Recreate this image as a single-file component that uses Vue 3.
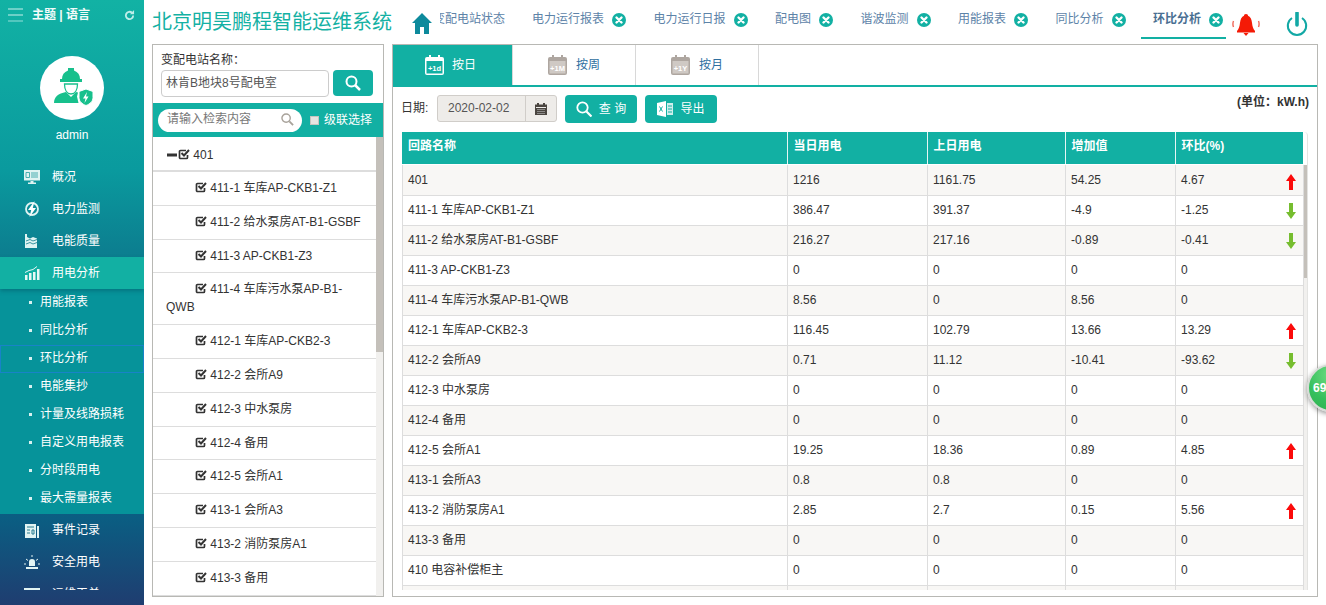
<script setup>
const menuTop = [
  { name: '概况', icon: 'monitor' },
  { name: '电力监测', icon: 'bolt' },
  { name: '电能质量', icon: 'quality' },
]
const subMenu = ['用能报表', '同比分析', '环比分析', '电能集抄', '计量及线路损耗', '自定义用电报表', '分时段用电', '最大需量报表']
const tabs = ['电力运行报表', '电力运行日报', '配电图', '谐波监测', '用能报表', '同比分析', '环比分析']
const tree = [
  { name: '401', root: true },
  { name: '411-1 车库AP-CKB1-Z1' },
  { name: '411-2 给水泵房AT-B1-GSBF' },
  { name: '411-3 AP-CKB1-Z3' },
  { name: '411-4 车库污水泵AP-B1-QWB' },
  { name: '412-1 车库AP-CKB2-3' },
  { name: '412-2 会所A9' },
  { name: '412-3 中水泵房' },
  { name: '412-4 备用' },
  { name: '412-5 会所A1' },
  { name: '413-1 会所A3' },
  { name: '413-2 消防泵房A1' },
  { name: '413-3 备用' },
]
const modes = [
  { name: '按日', tag: '+1d', active: true },
  { name: '按周', tag: '+1M' },
  { name: '按月', tag: '+1Y' },
]
const rows = [
  ['401', '1216', '1161.75', '54.25', '4.67', 'up'],
  ['411-1 车库AP-CKB1-Z1', '386.47', '391.37', '-4.9', '-1.25', 'down'],
  ['411-2 给水泵房AT-B1-GSBF', '216.27', '217.16', '-0.89', '-0.41', 'down'],
  ['411-3 AP-CKB1-Z3', '0', '0', '0', '0', ''],
  ['411-4 车库污水泵AP-B1-QWB', '8.56', '0', '8.56', '0', ''],
  ['412-1 车库AP-CKB2-3', '116.45', '102.79', '13.66', '13.29', 'up'],
  ['412-2 会所A9', '0.71', '11.12', '-10.41', '-93.62', 'down'],
  ['412-3 中水泵房', '0', '0', '0', '0', ''],
  ['412-4 备用', '0', '0', '0', '0', ''],
  ['412-5 会所A1', '19.25', '18.36', '0.89', '4.85', 'up'],
  ['413-1 会所A3', '0.8', '0.8', '0', '0', ''],
  ['413-2 消防泵房A1', '2.85', '2.7', '0.15', '5.56', 'up'],
  ['413-3 备用', '0', '0', '0', '0', ''],
  ['410 电容补偿柜主', '0', '0', '0', '0', ''],
  ['', '', '', '', '', ''],
]
</script>

<template>
  <div class="app">
    <aside class="side">
      <div class="side-top">
        <svg class="burger" viewBox="0 0 15 14" width="15" height="14"><path d="M0 1h15M0 7h15" stroke="#c8f0ec" stroke-width="1.200" fill="none"/><path d="M0 13h15" stroke="#7fd8d0" stroke-width="1.200" fill="none"/></svg>
        <span class="theme">主题 | 语言</span>
        <svg class="refresh" viewBox="0 0 12 12" width="11" height="11"><path d="M10 6a4 4 0 1 1-1.300-3" stroke="#bfeee9" stroke-width="2" fill="none"/><path d="M11 0v4.500H6.500z" fill="#bfeee9"/></svg>
      </div>
      <div class="avatar">
        <svg viewBox="0 0 64 64" width="64" height="64">
          <path d="M22 23c0-4 2-7 6-8.500V12h6v2.500c4 1.500 6 4.500 6 8.500h2v3H20v-3z" fill="#17c08c"/>
          <path d="M24.500 28h13c0 6-2.500 10-6.500 10s-6.500-4-6.500-10z" fill="none" stroke="#17c08c" stroke-width="1.300"/>
          <path d="M14 47c0-6 4-9.500 12-11l5 5 5-5 2 .5-1 4 1.500 6.500z" fill="#17c08c"/>
          <path d="M46 33l7 2.500v6c0 4-3 6.500-7 8-4-1.500-7-4-7-8v-6z" fill="#17c08c" stroke="#fff" stroke-width="1"/>
          <path d="M47 36l-4 6.500h2.500L44.500 47l4-6.500H46z" fill="#fff"/>
        </svg>
      </div>
      <div class="user">admin</div>
      <nav class="menu">
        <a v-for="m in menuTop" :key="m.name" class="item">
          <svg class="mi" viewBox="0 0 16 16" width="16" height="16">
            <template v-if="m.icon === 'monitor'"><path d="M0 1h16v10.500H0zM6.500 12h3v1.500H12v1.500H4v-1.500h2.500z" fill="#dff3f2"/><path d="M2 3.500h3.500v5H2zM7 4h7M7 6h7M7 8h7" stroke="#3aa6a8" fill="none" stroke-width=".9"/></template>
            <template v-else-if="m.icon === 'bolt'"><circle cx="8" cy="8" r="6" fill="none" stroke="#dff3f2" stroke-width="1.800"/><path d="M10.500 0L4 9h3.200L5.500 16l6.500-9H8.800z" fill="#fff"/></template>
            <template v-else><path d="M1 1h2v3l3 1.500L9 4l4 1.500V15H1z" fill="#dff3f2"/><path d="M2 8l4-1.500 3 1.500 4-1.500M2 11l4-1.500 3 1.500 4-1.500" stroke="#3a93a0" fill="none"/></template>
          </svg>
          <span>{{ m.name }}</span>
        </a>
        <a class="item active">
          <svg class="mi" viewBox="0 0 16 16" width="16" height="16"><path d="M1 10h2.500v5H1zM5 8h2.500v7H5zM9 7h2.500v8H9zM13 4h2.500v11H13z" fill="#e8f8f6"/><path d="M1 7.500l4-2 4-1 4-3" stroke="#e8f8f6" fill="none"/></svg>
          <span>用电分析</span>
        </a>
        <div class="sub">
          <a v-for="s in subMenu" :key="s" class="sub-item" :class="{ cur: s === '环比分析' }"><i></i>{{ s }}</a>
        </div>
        <a class="item">
          <svg class="mi" viewBox="0 0 16 16" width="16" height="16"><path d="M1 2h11v14H1z" fill="#e2f4f3"/><path d="M13 4h2v12h-2z" fill="#e2f4f3"/><path d="M3 5h7M3 8h3M3 11h3M8 8h2v4H8z" stroke="#2a7d90" fill="none"/></svg>
          <span>事件记录</span>
        </a>
        <a class="item">
          <svg class="mi" viewBox="0 0 16 16" width="16" height="16"><path d="M5 12V8a3 3 0 0 1 6 0v4zM2 13h12v2H2z" fill="#e2f4f3"/><path d="M8 1v2M2 5l2 1.500M14 5l-2 1.500M0 10h2M14 10h2" stroke="#e2f4f3"/></svg>
          <span>安全用电</span>
        </a>
        <a class="item">
          <svg class="mi" viewBox="0 0 16 16" width="16" height="16"><path d="M0 2h16v12H0z" fill="#e2f4f3"/></svg>
          <span>运维工单</span>
        </a>
      </nav>
    </aside>

    <main class="main">
      <header class="head">
        <h1 class="title">北京明昊鹏程智能运维系统</h1>
        <svg class="home" viewBox="0 0 20 21" width="20" height="21"><path d="M10 0L0 10h3v11h5v-7h4v7h5V10h3z" fill="#0d8a9c"/></svg>
        <div class="tabs">
          <div class="tabs-inner">
            <a class="tab first"><span>变配电站状态</span></a>
            <a v-for="t in tabs" :key="t" class="tab" :class="{ on: t === '环比分析' }">
              <span>{{ t }}</span>
              <svg class="x" viewBox="0 0 14 14" width="14" height="14"><circle cx="7" cy="7" r="7" fill="#12b0a3"/><path d="M4.500 4.500l5 5M9.500 4.500l-5 5" stroke="#fff" stroke-width="2.400" stroke-linecap="round"/></svg>
            </a>
          </div>
        </div>
        <svg class="bell" viewBox="0 0 28 22" width="28" height="22">
          <path d="M14 0c1.400 0 2 .8 2 1.800 2.500 1 3.500 3.500 4 7 .4 3.500 1 6 3 8.200v1.500H5V17c2-2.200 2.600-4.700 3-8.200.5-3.500 1.500-6 4-7C12 .8 12.600 0 14 0z" fill="#f41a06"/>
          <path d="M11.500 19h5l-2.500 3z" fill="#f41a06"/>
          <path d="M1.500 7c-.8 2-.8 4 0 6M26.500 7c.8 2 .8 4 0 6" stroke="#f0685a" stroke-width="1.400" fill="none"/>
        </svg>
        <svg class="power" viewBox="0 0 22 24" width="22" height="24">
          <path d="M6 6a9.200 9.200 0 1 0 10 0" fill="none" stroke="#12a8a5" stroke-width="2"/>
          <path d="M11 1v12" stroke="#12a8a5" stroke-width="3.600" stroke-linecap="round"/>
        </svg>
      </header>

      <div class="body">
        <section class="left">
          <div class="station">
            <label>变配电站名称：</label>
            <div class="station-row">
              <div class="station-input">林肯B地块8号配电室</div>
              <button class="station-btn">
                <svg viewBox="0 0 16 16" width="16" height="16"><circle cx="6.500" cy="6.500" r="5" fill="none" stroke="#fff" stroke-width="2"/><path d="M10 10l5 5" stroke="#fff" stroke-width="2.500"/></svg>
              </button>
            </div>
          </div>
          <div class="filter">
            <div class="pill">
              <span>请输入检索内容</span>
              <svg viewBox="0 0 14 14" width="13" height="13"><circle cx="5.500" cy="5.500" r="4.500" fill="none" stroke="#a8a29a" stroke-width="1.500"/><path d="M9 9l4 4" stroke="#a8a29a" stroke-width="2"/></svg>
            </div>
            <i class="cb"></i>
            <span class="cascade">级联选择</span>
          </div>
          <div class="tree-wrap">
            <ul class="tree">
              <li v-for="n in tree" :key="n.name" :class="{ root: n.root }">
                <svg v-if="n.root" class="minus" viewBox="0 0 10 4" width="10" height="4"><rect width="10" height="3" y="0.500" fill="#333"/></svg>
                <svg class="chk" viewBox="0 0 12 12" width="12" height="12"><path d="M9.500 7v2.500a1 1 0 0 1-1 1h-6a1 1 0 0 1-1-1v-6a1 1 0 0 1 1-1H8" fill="none" stroke="#333" stroke-width="1.700"/><path d="M3.500 5L6 7.500 11 2" fill="none" stroke="#333" stroke-width="2"/></svg>
                {{ n.name }}
              </li>
            </ul>
            <div class="track tree-track"><div class="thumb"></div></div>
          </div>
        </section>

        <section class="right">
          <div class="modes">
            <a v-for="m in modes" :key="m.name" class="mode" :class="{ on: m.active }">
              <svg viewBox="0 0 19 20" width="19" height="20">
                <path d="M2 2h2V0h2v2h7V0h2v2h2a2 2 0 0 1 2 2v14a2 2 0 0 1-2 2H2a2 2 0 0 1-2-2V4a2 2 0 0 1 2-2z" :fill="m.active ? '#fff' : '#aea6a0'"/>
                <rect x="1.500" y="6" width="16" height="12.500" :fill="m.active ? '#12b0a3' : '#cfc9c4'"/>
                <text x="9.500" y="15.500" text-anchor="middle" font-size="7.500" font-weight="700" fill="#fff" font-family="Liberation Sans">{{ m.tag }}</text>
              </svg>
              <span>{{ m.name }}</span>
            </a>
          </div>
          <div class="tools">
            <span class="date-label">日期:</span>
            <div class="date">
              <span class="date-val">2020-02-02</span>
              <span class="date-add">
                <svg viewBox="0 0 12 12" width="12" height="12"><path d="M0 1.500h2V0h2v1.500h4V0h2v1.500h2V12H0z" fill="#4a4540"/><path d="M1 4.500h10" stroke="#eeece9"/><path d="M2 6.500h8M2 8.500h8M2 10.500h8" stroke="#aaa" stroke-width=".7"/></svg>
              </span>
            </div>
            <button class="btn">
              <svg viewBox="0 0 16 16" width="16" height="16"><circle cx="6.500" cy="6.500" r="5.200" fill="none" stroke="#fff" stroke-width="1.800"/><path d="M10.500 10.500l5 5" stroke="#fff" stroke-width="2.200"/></svg>
              <span class="spaced">查 询</span>
            </button>
            <button class="btn">
              <svg viewBox="0 0 16 16" width="16" height="16"><path d="M0 2l9-2v16l-9-2z" fill="#fff"/><path d="M10 2h6v12h-6z" fill="#cfefec"/><path d="M2.500 5.500l3 5M5.500 5.500l-3 5" stroke="#12b0a3"/><path d="M11 5h4M11 8h4M11 11h4" stroke="#12b0a3"/></svg>
              <span>导出</span>
            </button>
            <span class="unit">(单位：kW.h)</span>
          </div>
          <div class="tbl">
            <div class="tbl-inner">
              <table class="t-head">
                <colgroup><col class="c1"><col class="c2"><col class="c3"><col class="c4"><col class="c5"></colgroup>
                <thead><tr><th>回路名称</th><th>当日用电</th><th>上日用电</th><th>增加值</th><th>环比(%)</th></tr></thead>
              </table>
              <div class="t-body">
                <table class="t-rows">
                  <colgroup><col class="c1"><col class="c2"><col class="c3"><col class="c4"><col class="c5"></colgroup>
                  <tbody>
                    <tr v-for="(r, i) in rows" :key="i">
                      <td>{{ r[0] }}</td><td>{{ r[1] }}</td><td>{{ r[2] }}</td><td>{{ r[3] }}</td>
                      <td>
                        <div class="rate">
                          <span>{{ r[4] }}</span>
                          <svg v-if="r[5] === 'up'" viewBox="0 0 10 16" width="10" height="16"><path d="M5 0l5 7H7v9H3V7H0z" fill="#fb0a0a"/></svg>
                          <svg v-else-if="r[5] === 'down'" viewBox="0 0 10 16" width="10" height="16"><path d="M3 0h4v9h3l-5 7-5-7h3z" fill="#76bd2f"/></svg>
                        </div>
                      </td>
                    </tr>
                  </tbody>
                </table>
                <div class="track body-track"><div class="thumb"></div></div>
              </div>
            </div>
          </div>
        </section>
      </div>
    </main>
    <div class="ball">69</div>
  </div>
</template>

<style scoped>
* { box-sizing: border-box; }
.app {
  position: relative; display: flex; width: 1326px; height: 605px; overflow: hidden; background: #fff;
  font: 12px/1.4 "Liberation Sans", "Noto Sans CJK SC", sans-serif; color: #333;
}
.side {
  width: 144px; flex: none; color: #fff; display: flex; flex-direction: column;
  background: linear-gradient(180deg, #12b2a4 0, #0a9a9e 170px, #0c7f90 250px, #0b5d82 520px, #1f3d70 605px);
}
.side-top { display: flex; align-items: center; height: 32px; padding: 0 9px 2px 8px; }
.burger { flex: none; }
.theme { margin-left: 9px; flex: 1; font-weight: 700; color: #f2fbfa; }
.avatar { width: 64px; height: 64px; margin: 24px auto 0; border-radius: 50%; background: #fff; }
.avatar svg { display: block; }
.user { text-align: center; margin-top: 7px; line-height: 17px; }
.menu { margin-top: 17px; height: 429px; overflow: hidden; display: flex; flex-direction: column; flex: none; }
.item { flex: none; height: 32px; display: flex; align-items: center; padding-left: 24px; gap: 12px; color: #fff; }
.item.active { background: #12b0a3; box-shadow: 0 2px 4px rgba(0,60,80,.35); position: relative; }
.sub { background: #06939a; flex: none; height: 225px; }
.sub-item { display: flex; align-items: center; height: 28px; padding: 0 0 2px 28px; color: #fff; border: 1px solid transparent; }
.sub-item i { width: 3px; height: 3px; background: #d8f1f0; margin-right: 8px; }
.sub-item.cur { border-color: #1883c8; }

.main { flex: 1; display: flex; flex-direction: column; min-width: 0; }
.head { height: 44px; flex: none; display: flex; align-items: flex-start; padding-left: 8px; }
.title { margin: 9px 0 0; font-size: 20px; line-height: 26px; font-weight: 400; color: #14b1a4; white-space: nowrap; width: 240px; flex: none; }
.home { margin: 13px 0 0 20px; flex: none; }
.tabs { width: 790px; margin-left: 8px; overflow: hidden; height: 40px; flex: none; }
.tabs-inner { display: flex; gap: 12.500px; margin-left: -7px; width: max-content; }
.tab { display: flex; align-items: center; height: 39px; padding: 2px 3px 0 12px; gap: 8px; color: #5d83a8; white-space: nowrap; border-bottom: 2px solid transparent; }
.tab.first { padding: 2px 2.500px 0 0; }
.tab.on { border-bottom-color: #12b0a3; color: #4a6f92; font-weight: 700; }
.x { flex: none; }
.bell { margin: 14px 0 0 2px; flex: none; }
.power { margin: 12px 0 0 26px; flex: none; }

.body { flex: 1; display: flex; gap: 8px; padding: 0 8px 8px 8px; min-height: 0; }
.left { width: 232px; flex: none; border: 1px solid #b8b8b4; display: flex; flex-direction: column; min-height: 0; }
.station { padding: 7px 10px 0 8px; height: 58px; flex: none; }
.station label { display: block; line-height: 17px; }
.station-row { display: flex; gap: 4px; margin-top: 1px; }
.station-input { width: 168px; height: 27px; border: 1px solid #ccc; border-radius: 4px; padding-left: 4px; line-height: 25px; color: #555; }
.station-btn { width: 40px; height: 26px; border: 0; border-radius: 4px; background: #12b0a3; display: flex; align-items: center; justify-content: center; padding: 0; }
.filter { height: 34px; background: #12b0a3; display: flex; align-items: center; padding-left: 5px; flex: none; }
.pill { width: 144px; height: 23px; background: #fff; border-radius: 12px; display: flex; align-items: center; justify-content: space-between; padding: 0 8px 1px 9px; color: #777; }
.cb { width: 9px; height: 9px; margin: 1px 5px 0 8px; background: #e6e4e1; border: 1px solid #c8c4bf; }
.cascade { color: #fff; }
.tree-wrap { flex: 1; display: flex; min-height: 0; overflow: hidden; }
.tree { flex: 1; margin: 0; padding: 0; list-style: none; }
.tree li { padding: 8px 10px 7px 13px; line-height: 17.850px; border-bottom: 1px solid #ddd; text-indent: 29px; }
.tree li.root { text-indent: 1px; border-bottom-width: 2px; padding-top: 10px; padding-bottom: 5px; }
.minus { margin-right: 1px; vertical-align: 2px; }
.chk { vertical-align: -1px; }
.track { width: 7px; flex: none; background: #f1f0ee; }
.thumb { background: #c4c0ba; width: 100%; }
.tree-track .thumb { height: 215px; }

.right { flex: 1; border: 1px solid #b8b8b4; min-width: 0; display: flex; flex-direction: column; }
.modes { height: 42px; flex: none; display: flex; border-bottom: 2px solid #12b0a3; }
.mode { display: flex; align-items: center; gap: 9px; width: 123px; padding-left: 35px; color: #2f6f9f; border-right: 1px solid #d8d8d8; }
.mode.on { background: #12b0a3; color: #fff; width: 120px; padding-left: 32px; gap: 8px; }
.tools { position: relative; display: flex; align-items: flex-start; height: 45px; padding: 8px 0 0 8px; flex: none; }
.date-label { line-height: 27px; width: 36px; flex: none; }
.date { width: 120px; height: 27px; display: flex; border: 1px solid #d0cdc9; border-radius: 3px; background: #eeece9; flex: none; }
.date-val { flex: 1; padding-left: 10px; line-height: 25px; color: #555; }
.date-add { width: 31px; border-left: 1px solid #d0cdc9; display: flex; align-items: center; justify-content: center; }
.btn { margin-left: 8px; width: 72px; height: 28px; flex: none; border: 0; border-radius: 4px; background: #12b0a3; color: #fff; display: flex; align-items: center; justify-content: center; gap: 7px; padding: 0; font: inherit; }
.spaced { white-space: pre; }
.unit { margin-left: auto; margin-right: 8px; margin-top: -1px; font-weight: 700; line-height: 17px; color: #333; }
.tbl { flex: 1; min-height: 0; padding: 0 9px; }
.tbl-inner { height: 458px; overflow: hidden; border-right: 1px solid #e4e4e2; border-top-right-radius: 4px; }
table { border-collapse: collapse; table-layout: fixed; width: 901px; }
.c1 { width: 385px; } .c2 { width: 140px; } .c3 { width: 138px; } .c4 { width: 110px; } .c5 { width: 128px; }
th { height: 32px; background: #12b0a3; color: #fff; text-align: left; padding: 0 6px 3px; font-weight: 700; border-right: 1px solid #e6f6f5; }
th:last-child { border-right: 0; }
.t-body { display: flex; margin-top: 1px; height: 425px; overflow: hidden; }
.t-rows { flex: none; align-self: flex-start; }
td { height: 30px; padding: 0 5px; border: 1px solid #ddd; border-top: 0; }
tr:first-child td { padding-top: 2px; }
tr:nth-child(odd) td { background: #f8f7f5; }
.rate { display: flex; justify-content: space-between; align-items: center; padding-right: 2px; height: 29px; }
tr:first-child .rate { height: 27px; }
.rate svg { margin-top: 2px; }
.body-track { width: 4px; }
.body-track .thumb { height: 113px; }

.ball {
  position: absolute; left: 1307px; top: 364px; width: 48px; height: 48px; border-radius: 50%;
  background: radial-gradient(circle at 50% 20%, #6fdc83, #35bf5c 60%, #2fb04f);
  border: 2px solid #d8dcd8; box-shadow: 0 2px 5px rgba(0,0,0,.4);
  color: #fff; font-weight: 700; line-height: 44px; padding-left: 4px; font-size: 12px;
}
</style>

<style>
html, body { margin: 0; padding: 0; }
</style>
